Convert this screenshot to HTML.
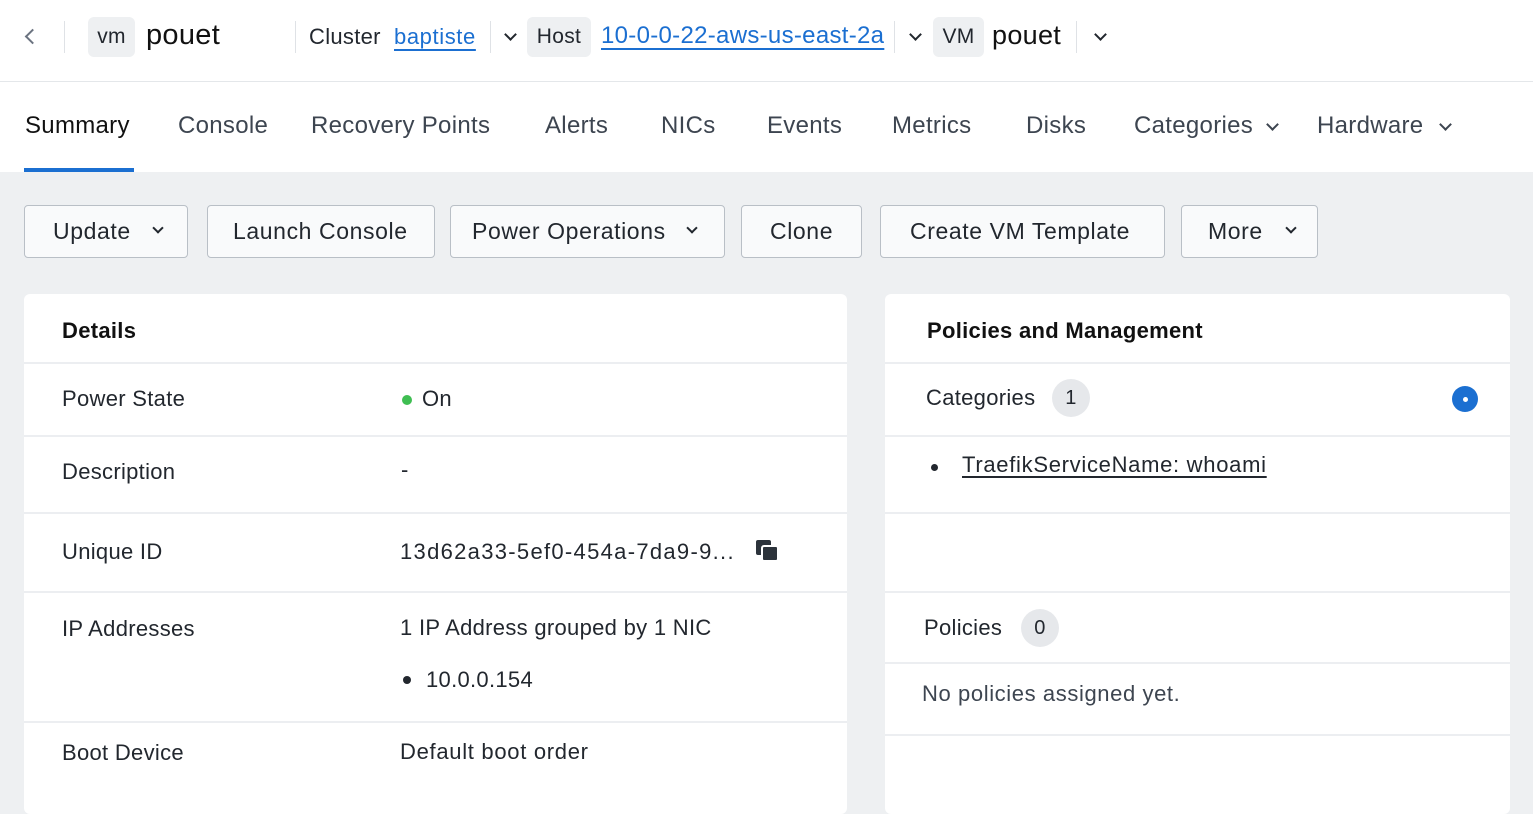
<!DOCTYPE html>
<html><head><meta charset="utf-8"><style>
*{margin:0;padding:0;box-sizing:border-box}
body{width:1533px;height:793px;overflow:hidden;background:#eef0f2;font-family:"Liberation Sans",sans-serif;color:#22272e;position:relative;letter-spacing:0.3px}
.a{position:absolute;white-space:nowrap}
.hdr{position:absolute;left:0;top:0;width:1533px;height:172px;background:#fff}
.tag{position:absolute;background:#eef0f2;border-radius:6px;font-size:21px;text-align:center;line-height:40px;height:40px;top:17px;color:#22272e}
.sep{position:absolute;width:1px;height:32px;top:21px;background:#dfe2e6}
.lnk{color:#1b6fd1;text-decoration:underline;text-underline-offset:5px}
.chev{position:absolute;width:9px;height:9px;border-right:2.5px solid #22272e;border-bottom:2.5px solid #22272e;transform:rotate(45deg)}
.tab{position:absolute;top:112px;font-size:24px;color:#3d4550}
.btn{position:absolute;top:205px;height:53px;border:1px solid #b9bfc6;border-radius:4px;background:#f9fafb;font-size:23px;line-height:51px;padding-left:28px;color:#22272e;letter-spacing:0.6px}
.card{position:absolute;top:294px;background:#fff;border-radius:6px;height:520px}
.hl{position:absolute;height:2px;background:#eceef1}
.t{position:absolute;font-size:22px;white-space:nowrap}
.badge{position:absolute;width:38px;height:38px;border-radius:50%;background:#e6e8eb;font-size:20px;text-align:center;line-height:38px}
</style></head><body>
<div class="hdr"></div>
<div class="a" style="left:0;top:81px;width:1533px;height:1px;background:#e4e7ea"></div>
<div class="a" style="left:27px;top:31px;width:11px;height:11px;border-left:2px solid #6b7380;border-bottom:2px solid #6b7380;transform:rotate(45deg)"></div>
<div class="sep" style="left:64px"></div>
<div class="tag" style="left:88px;width:47px">vm</div>
<div class="a" style="left:146px;top:19px;font-size:29px;color:#111">pouet</div>
<div class="sep" style="left:295px"></div>
<div class="a" style="left:309px;top:24px;font-size:22px">Cluster</div>
<div class="a lnk" style="left:394px;top:24px;font-size:22px;letter-spacing:0.6px">baptiste</div>
<div class="sep" style="left:490px"></div>
<div class="chev" style="left:506px;top:30px"></div>
<div class="tag" style="left:527px;width:64px">Host</div>
<div class="a lnk" style="left:601px;top:22px;font-size:24px">10-0-0-22-aws-us-east-2a</div>
<div class="sep" style="left:894px"></div>
<div class="chev" style="left:911px;top:30px"></div>
<div class="tag" style="left:933px;width:51px">VM</div>
<div class="a" style="left:992px;top:20px;font-size:27px;color:#111">pouet</div>
<div class="sep" style="left:1076px"></div>
<div class="chev" style="left:1096px;top:30px"></div>

<div class="tab" style="left:25px;color:#111">Summary</div>
<div class="a" style="left:24px;top:168px;width:110px;height:4px;background:#1b6fd1"></div>
<div class="tab" style="left:178px">Console</div>
<div class="tab" style="left:311px">Recovery Points</div>
<div class="tab" style="left:545px">Alerts</div>
<div class="tab" style="left:661px">NICs</div>
<div class="tab" style="left:767px">Events</div>
<div class="tab" style="left:892px">Metrics</div>
<div class="tab" style="left:1026px">Disks</div>
<div class="tab" style="left:1134px">Categories</div>
<div class="chev" style="left:1268px;top:120px;border-color:#3d4550"></div>
<div class="tab" style="left:1317px">Hardware</div>
<div class="chev" style="left:1441px;top:120px;border-color:#3d4550"></div>

<div class="btn" style="left:24px;width:164px">Update</div><div class="chev" style="left:154px;top:224px;width:8px;height:8px;border-width:2px"></div>
<div class="btn" style="left:207px;width:228px;padding-left:25px">Launch Console</div>
<div class="btn" style="left:450px;width:275px;padding-left:21px">Power Operations</div><div class="chev" style="left:688px;top:224px;width:8px;height:8px;border-width:2px"></div>
<div class="btn" style="left:741px;width:121px">Clone</div>
<div class="btn" style="left:880px;width:285px;padding-left:29px">Create VM Template</div>
<div class="btn" style="left:1181px;width:137px;padding-left:26px">More</div><div class="chev" style="left:1287px;top:224px;width:8px;height:8px;border-width:2px"></div>

<div class="card" style="left:24px;width:823px">
<div class="t" style="left:38px;top:24px;font-weight:bold;color:#111">Details</div>
<div class="hl" style="left:0;top:68px;width:823px"></div>
<div class="t" style="left:38px;top:92px">Power State</div>
<div class="a" style="left:378px;top:101px;width:10px;height:10px;border-radius:50%;background:#3fbe52"></div>
<div class="t" style="left:398px;top:92px">On</div>
<div class="hl" style="left:0;top:141px;width:823px"></div>
<div class="t" style="left:38px;top:165px">Description</div>
<div class="t" style="left:377px;top:163px">-</div>
<div class="hl" style="left:0;top:218px;width:823px"></div>
<div class="t" style="left:38px;top:245px">Unique ID</div>
<div class="t" style="left:376px;top:245px;letter-spacing:1.3px">13d62a33-5ef0-454a-7da9-9...</div>
<div class="a" style="left:732px;top:246px;width:15px;height:15px;background:#2c333b;border-radius:2px"></div>
<div class="a" style="left:737px;top:251px;width:18px;height:17px;background:#2c333b;border:2px solid #fff;border-radius:3px"></div>
<div class="hl" style="left:0;top:297px;width:823px"></div>
<div class="t" style="left:38px;top:322px">IP Addresses</div>
<div class="t" style="left:376px;top:321px">1 IP Address grouped by 1 NIC</div>
<div class="a" style="left:379px;top:382px;width:8px;height:8px;border-radius:50%;background:#22272e"></div>
<div class="t" style="left:402px;top:373px">10.0.0.154</div>
<div class="hl" style="left:0;top:427px;width:823px"></div>
<div class="t" style="left:38px;top:446px">Boot Device</div>
<div class="t" style="left:376px;top:445px;letter-spacing:0.7px">Default boot order</div>
</div>

<div class="card" style="left:885px;width:625px">
<div class="t" style="left:42px;top:24px;font-weight:bold;color:#111">Policies and Management</div>
<div class="hl" style="left:0;top:68px;width:625px"></div>
<div class="t" style="left:41px;top:91px">Categories</div>
<div class="badge" style="left:167px;top:85px">1</div>
<div class="a" style="left:567px;top:92px;width:26px;height:26px;border-radius:50%;background:#1b6fd1"></div>
<div class="a" style="left:578px;top:103px;width:5px;height:5px;border-radius:50%;background:#fff"></div>
<div class="hl" style="left:0;top:141px;width:625px"></div>
<div class="a" style="left:46px;top:170px;width:7px;height:7px;border-radius:50%;background:#22272e"></div>
<div class="t" style="left:77px;top:158px;text-decoration:underline;text-underline-offset:4px;letter-spacing:0.7px">TraefikServiceName: whoami</div>
<div class="hl" style="left:0;top:218px;width:625px"></div>
<div class="hl" style="left:0;top:297px;width:625px"></div>
<div class="t" style="left:39px;top:321px">Policies</div>
<div class="badge" style="left:136px;top:315px">0</div>
<div class="hl" style="left:0;top:368px;width:625px"></div>
<div class="t" style="left:37px;top:387px;color:#3d4550;letter-spacing:0.6px">No policies assigned yet.</div>
<div class="hl" style="left:0;top:440px;width:625px"></div>
</div>
</body></html>
